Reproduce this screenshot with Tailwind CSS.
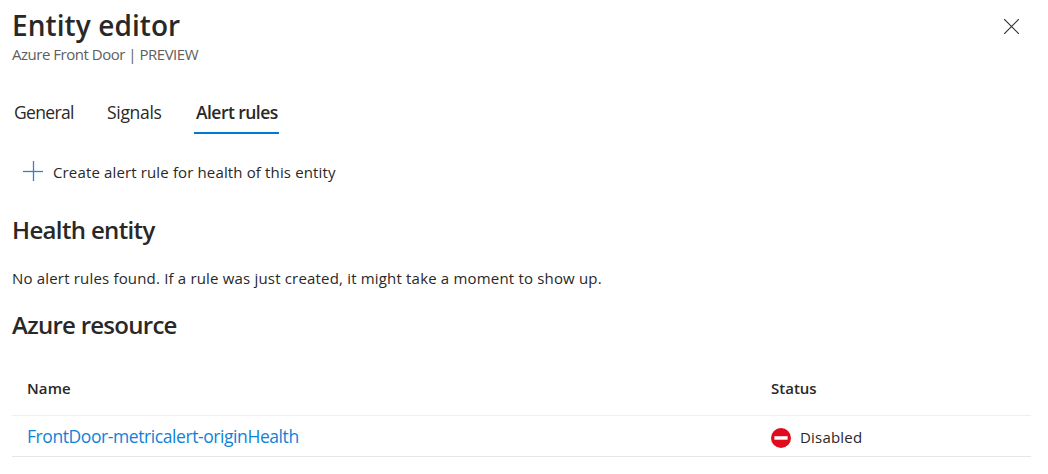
<!DOCTYPE html>
<html lang="en"><head><meta charset="utf-8"><title>Entity editor</title>
<script src="https://cdn.jsdelivr.net/npm/@tailwindcss/browser@4"></script></head>
<body class="bg-white text-[#292827] font-['Open_Sans',sans-serif] h-[474px] overflow-hidden whitespace-nowrap">
<main class="flex flex-col pl-3 pr-[17px]">
<header class="flex justify-between pt-1.5 h-[93px]">
<div><h1 class="h-[38px] leading-[38px] text-[28px] tracking-[0.08px] font-semibold">Entity editor</h1>
<p class="h-5 leading-5 text-[15px] tracking-[-0.48px] text-[#605e5c]">Azure Front Door | PREVIEW</p></div>
<button aria-label="Close" class="mt-[13px] mr-[12px] size-[15px]"><svg class="size-[15px]" viewBox="0 0 15 15" fill="none" stroke="#323130" stroke-width="1.2"><path d="M0 0l15 15M15 0L0 15"/></svg></button>
</header>
<nav class="flex h-[41px] text-[17.5px] leading-[39px]">
<a class="w-[93px] pl-0.5 tracking-[-0.65px]">General</a>
<a class="w-[89px] pl-0.5 tracking-[-0.3px]">Signals</a>
<a class="w-[85px] pl-0.5 font-semibold tracking-[-0.55px] border-b-2 border-[#0078d4]">Alert rules</a>
</nav>
<div class="flex items-center h-6 mt-[26px] pl-[11px]">
<svg class="size-5 mb-[2px]" viewBox="0 0 20 20" fill="none" stroke-width="1.3"><path stroke="#2f80dc" d="M0 10.5h20"/><path stroke="#4677d2" d="M10.5 0v20"/></svg>
<span class="ml-2.5 text-[15px] tracking-[0.14px] leading-6">Create alert rule for health of this entity</span>
</div>
<h2 class="mt-[30px] h-8 leading-8 text-2xl tracking-[-0.65px] font-semibold">Health entity</h2>
<p class="mt-5 h-6 leading-6 text-[15px] tracking-[0.18px]">No alert rules found. If a rule was just created, it might take a moment to show up.</p>
<h2 class="mt-[19px] h-8 leading-8 text-2xl tracking-[-0.73px] font-semibold">Azure resource</h2>
<section class="mt-[21px]">
<div class="flex items-center h-[54px] pl-[15px] border-b border-[#f0efee] text-[15px] font-semibold"><span class="w-[744px] tracking-[0.1px]">Name</span><span>Status</span></div>
<div class="flex items-center h-[41px] pl-[15px] border-b border-[#e6e6e6]"><span class="w-[744px] pt-px"><a class="text-[17.5px] tracking-[-0.42px] text-[#0f82d7]">FrontDoor-metricalert-originHealth</a></span>
<span class="flex items-center text-[15px] pt-[3px]"><svg class="size-5 mr-[9px]" viewBox="0 0 20 20"><circle cx="10" cy="10" r="10" fill="#e00b1c"/><path fill="#fff" d="M3.4 8.2h13.2v3.5H3.4z"/></svg><span class="tracking-[0.2px]">Disabled</span></span></div>
</section>
</main></body></html>
